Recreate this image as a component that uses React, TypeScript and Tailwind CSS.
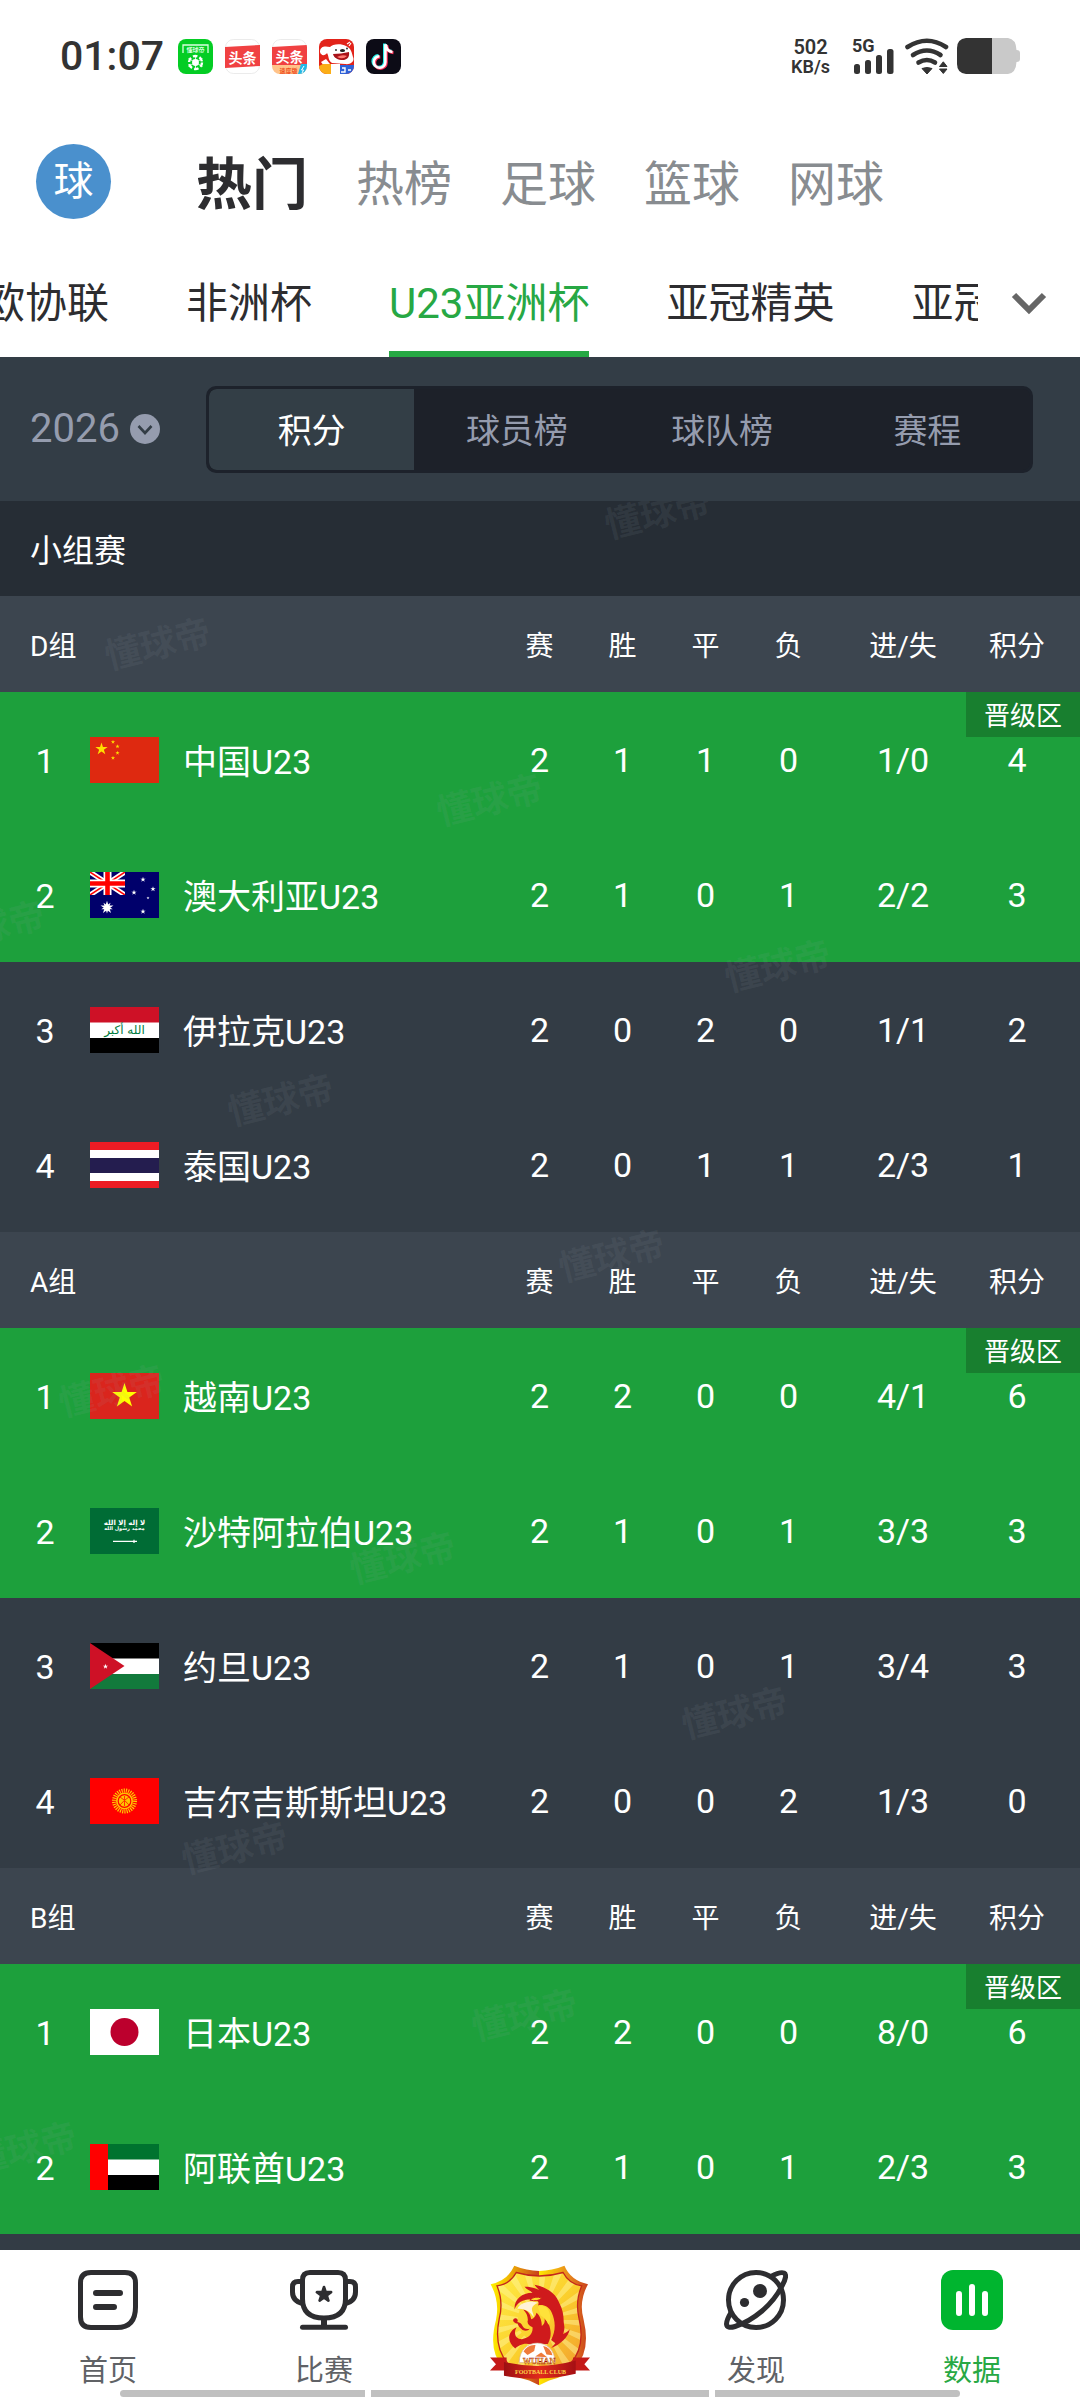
import React, { useState } from "react";

const STAR = "M0 -10 L2.25 -3.1 L9.5 -3.1 L3.64 1.2 L5.88 8.1 L0 3.8 L-5.88 8.1 L-3.64 1.2 L-9.5 -3.1 L-2.25 -3.1 Z";

type FlagCode = "cn" | "au" | "iq" | "th" | "vn" | "sa" | "jo" | "kg" | "jp" | "ae";

type Team = {
  flag: FlagCode;
  name: string;
  stats: (number | string)[];
};

type Group = { name: string; teams: Team[] };

const COLUMNS = ["赛", "胜", "平", "负", "进/失", "积分"];
const CHANNELS = ["热门", "热榜", "足球", "篮球", "网球"];
const LEAGUES = ["欧协联", "非洲杯", "U23亚洲杯", "亚冠精英", "亚冠"];
const VIEWS = ["积分", "球员榜", "球队榜", "赛程"];
const QUALIFIED = 2;

const GROUPS: Group[] = [
  {
    name: "D组",
    teams: [
      { flag: "cn", name: "中国U23", stats: [2, 1, 1, 0, "1/0", 4] },
      { flag: "au", name: "澳大利亚U23", stats: [2, 1, 0, 1, "2/2", 3] },
      { flag: "iq", name: "伊拉克U23", stats: [2, 0, 2, 0, "1/1", 2] },
      { flag: "th", name: "泰国U23", stats: [2, 0, 1, 1, "2/3", 1] },
    ],
  },
  {
    name: "A组",
    teams: [
      { flag: "vn", name: "越南U23", stats: [2, 2, 0, 0, "4/1", 6] },
      { flag: "sa", name: "沙特阿拉伯U23", stats: [2, 1, 0, 1, "3/3", 3] },
      { flag: "jo", name: "约旦U23", stats: [2, 1, 0, 1, "3/4", 3] },
      { flag: "kg", name: "吉尔吉斯斯坦U23", stats: [2, 0, 0, 2, "1/3", 0] },
    ],
  },
  {
    name: "B组",
    teams: [
      { flag: "jp", name: "日本U23", stats: [2, 2, 0, 0, "8/0", 6] },
      { flag: "ae", name: "阿联酋U23", stats: [2, 1, 0, 1, "2/3", 3] },
    ],
  },
];

// centre points, measured from the top of the standings
const WATERMARKS = [
  [658, 13],
  [158, 144],
  [490, 300],
  [-8, 427],
  [778, 466],
  [281, 600],
  [612, 756],
  [112, 891],
  [403, 1058],
  [735, 1213],
  [235, 1348],
  [525, 1515],
  [24, 1648],
];

const Star = ({ x, y, s, fill }: { x: number; y: number; s: number; fill: string }) => (
  <path d={STAR} fill={fill} transform={`translate(${x} ${y}) scale(${s})`} />
);

const FLAGS: Record<FlagCode, React.ReactNode> = {
  cn: (
    <>
      <rect width="69" height="46" fill="#de2910" />
      <Star x={11.5} y={12} s={0.65} fill="#ffde00" />
      <Star x={23} y={5} s={0.22} fill="#ffde00" />
      <Star x={27.5} y={9.5} s={0.22} fill="#ffde00" />
      <Star x={27.5} y={16} s={0.22} fill="#ffde00" />
      <Star x={23} y={21} s={0.22} fill="#ffde00" />
    </>
  ),
  au: (
    <>
      <rect width="69" height="46" fill="#00006b" />
      <svg width="35" height="23" viewBox="0 0 35 23">
        <path d="M0 0 L35 23 M35 0 L0 23" stroke="#fff" strokeWidth="5" />
        <path d="M0 0 L35 23 M35 0 L0 23" stroke="#f00" strokeWidth="1.5" />
        <path d="M17.5 0 V23 M0 11.5 H35" stroke="#fff" strokeWidth="8" />
        <path d="M17.5 0 V23 M0 11.5 H35" stroke="#f00" strokeWidth="4.6" />
      </svg>
      <Star x={17} y={35.5} s={0.68} fill="#fff" />
      <g transform="rotate(180 17 35.5)">
        <Star x={17} y={35.5} s={0.6} fill="#fff" />
      </g>
      <Star x={53} y={7.5} s={0.28} fill="#fff" />
      <Star x={63} y={17} s={0.28} fill="#fff" />
      <Star x={44} y={20.5} s={0.28} fill="#fff" />
      <Star x={53} y={39.5} s={0.28} fill="#fff" />
      <Star x={58} y={26} s={0.16} fill="#fff" />
    </>
  ),
  iq: (
    <>
      <rect width="69" height="46" fill="#fff" />
      <rect width="69" height="15.5" fill="#ce1126" />
      <rect y="31" width="69" height="15" fill="#000" />
      <text x="34.5" y="27" textAnchor="middle" fontSize="12" fill="#007a3d" fontFamily="DejaVu Sans">
        الله أكبر
      </text>
    </>
  ),
  th: (
    <>
      <rect width="69" height="46" fill="#ed1c24" />
      <rect y="8" width="69" height="31" fill="#fff" />
      <rect y="16" width="69" height="15" fill="#241d4f" />
    </>
  ),
  vn: (
    <>
      <rect width="69" height="46" fill="#da251d" />
      <Star x={34.5} y={23} s={1.3} fill="#ff0" />
    </>
  ),
  sa: (
    <>
      <rect width="69" height="46" fill="#006c35" />
      <text x="34.5" y="17" textAnchor="middle" fontSize="7" fill="#fff" fontFamily="DejaVu Sans" fontWeight="700">
        لا إله إلا الله
      </text>
      <text x="34.5" y="22" textAnchor="middle" fontSize="5" fill="#fff" fontFamily="DejaVu Sans" fontWeight="700">
        محمد رسول الله
      </text>
      <path d="M23 33.3 H47 M44 31.8 V35" stroke="#fff" strokeWidth="1.2" />
    </>
  ),
  jo: (
    <>
      <rect width="69" height="46" fill="#fff" />
      <rect width="69" height="15.5" fill="#000" />
      <rect y="31" width="69" height="15" fill="#127a3c" />
      <path d="M0 0 L34.5 23 L0 46 Z" fill="#ce1126" />
      <Star x={15.5} y={23.5} s={0.28} fill="#fff" />
    </>
  ),
  kg: (
    <>
      <rect width="69" height="46" fill="#f00" />
      <circle cx="34.5" cy="23" r="10.5" fill="none" stroke="#ffd000" strokeWidth="4" strokeDasharray="1.1 1.1" />
      <circle cx="34.5" cy="23" r="8.5" fill="#ffc400" />
      <circle cx="34.5" cy="23" r="6.3" fill="none" stroke="#f00" strokeWidth="1.2" />
      <path d="M30 19 Q35 22 39 27 M39 19 Q34 22 30 27 M34.5 18 V28" stroke="#f30" strokeWidth="1" fill="none" />
    </>
  ),
  jp: (
    <>
      <rect width="69" height="46" fill="#fff" />
      <circle cx="34.5" cy="23" r="14" fill="#bc002d" />
    </>
  ),
  ae: (
    <>
      <rect width="69" height="46" fill="#fff" />
      <rect width="69" height="15.5" fill="#00732f" />
      <rect y="31" width="69" height="15" fill="#000" />
      <rect width="18" height="46" fill="#f00" />
    </>
  ),
};

const Flag = ({ code }: { code: FlagCode }) => (
  <svg width="69" height="46" viewBox="0 0 69 46" className="block" aria-hidden>
    {FLAGS[code]}
  </svg>
);

const NotificationIcons = () => (
  <div className="flex gap-[12px]" aria-hidden>
    <svg width="35" height="35" viewBox="0 0 35 35">
      <rect width="35" height="35" rx="8" fill="#04cd24" />
      <path d="M5 14 V6 H30 V14" stroke="#d9ffdf" strokeWidth="1.3" fill="none" />
      <text x="17.5" y="12.5" fontSize="6" fontWeight="700" textAnchor="middle" fill="#d9ffdf">
        懂球帝
      </text>
      <circle cx="17.5" cy="23.5" r="6.5" fill="none" stroke="#fff" strokeWidth="2.4" strokeDasharray="4.6 2.2" />
      <circle cx="17.5" cy="23.5" r="3.4" fill="#fff" />
      <path d="M17.5 16 V31 M10.5 19.5 L24.5 27.5 M24.5 19.5 L10.5 27.5" stroke="#fff" strokeWidth="0.8" />
    </svg>
    <svg width="35" height="35" viewBox="0 0 35 35">
      <rect x="0.5" y="0.5" width="34" height="34" rx="8" fill="#fff" stroke="#e2e2e2" strokeWidth="0.7" />
      <path d="M0 8 L35 6 V27 L0 29 Z" fill="#f04142" />
      <text x="17.5" y="23.5" fontSize="14" fontWeight="700" textAnchor="middle" fill="#fff">
        头条
      </text>
    </svg>
    <svg width="35" height="35" viewBox="0 0 35 35">
      <clipPath id="lite">
        <rect width="35" height="35" rx="8" />
      </clipPath>
      <g clipPath="url(#lite)">
        <rect x="0.5" y="0.5" width="34" height="34" rx="8" fill="#fff" stroke="#e2e2e2" strokeWidth="0.7" />
        <path d="M0 8 L35 6 V27 H0 Z" fill="#f04142" />
        <rect y="26" width="35" height="9" fill="#ffc38a" />
        <path d="M29 25 H35 V35 H26 Z" fill="#22b8e6" />
        <path d="M32 27 L29.5 31 H31.5 L30 34" stroke="#fff" strokeWidth="1" fill="none" />
        <text x="17.5" y="22.5" fontSize="14" fontWeight="700" textAnchor="middle" fill="#fff">
          头条
        </text>
        <text x="16.5" y="33.5" fontSize="6" fontWeight="700" textAnchor="middle" fill="#f0501e">
          速度版
        </text>
      </g>
    </svg>
    <svg width="35" height="35" viewBox="0 0 35 35">
      <clipPath id="dog">
        <rect width="35" height="35" rx="8" />
      </clipPath>
      <g clipPath="url(#dog)">
        <rect width="35" height="35" fill="#e2231a" />
        <path d="M1 13 C1 7 6 7 11 8 C13 5 22 4 27 7 C32 9 33 14 34 18 C36 22 32 26 26 25 L13 24 C9 22 10 17 8 14 C6 17 2 17 1 13 Z" fill="#fff" />
        <path d="M2 23 L7 20 L11 25 L5 27 Z" fill="#fff" />
        <path d="M28 5 L31 3 M30 7 L32 4" stroke="#fff" strokeWidth="1.2" />
        <ellipse cx="23.5" cy="11.5" rx="2.6" ry="1.5" fill="#222" />
        <circle cx="17" cy="11" r="0.9" fill="#222" />
        <circle cx="28" cy="9.5" r="0.9" fill="#222" />
        <path d="M14 15 C19 15 25 14 30 13 C31 19 27 21 24 21 C19 21 15 19 14 15 Z" fill="#a81218" />
        <path d="M18 18 Q23 15 28 17 Q24 21 18 18 Z" fill="#ff7a72" />
        <path d="M0 27 L4 25 H12 V35 H0 Z" fill="#fbae17" />
        <path d="M12 25 H21 V35 H12 Z" fill="#fff" />
        <rect x="21" y="26" width="14" height="9" fill="#2f62d8" />
        <path d="M23 29 H26 V33 H22 M29 31 H32" stroke="#fff" strokeWidth="1.4" fill="none" />
      </g>
    </svg>
    <svg width="35" height="35" viewBox="0 0 35 35">
      <rect width="35" height="35" rx="8" fill="#0c0b16" />
      <g fill="none" strokeWidth="3">
        <path d="M18.500 4.500 V22.500 A5.800 5.800 0 1 1 12.500 16.600 M19 5 Q19.500 11.500 25.500 12.300" stroke="#25f4ee" />
        <path d="M20.300 6 V23.700 A5.800 5.800 0 1 1 14.300 17.900 M20.800 6.500 Q21.500 13 27.500 13.700" stroke="#fe2c55" />
        <path d="M19.400 5.200 V23 A5.800 5.800 0 1 1 13.400 17.200 M19.900 5.600 Q20.500 12.300 26.500 13" stroke="#fff" strokeWidth="2.600" />
      </g>
    </svg>
  </div>
);

const StatusBar = () => (
  <div className="flex h-28 items-center justify-between px-[60px] text-[#333]">
    <div className="flex items-center gap-[14px]">
      <time className="text-[41px] leading-none font-medium">01:07</time>
      <NotificationIcons />
    </div>
    <div className="flex items-center">
      <div className="mr-[22px] text-center font-semibold whitespace-nowrap">
        <div className="pt-0.5 text-[20px] leading-5">502</div>
        <div className="text-[18px] leading-5">KB/s</div>
      </div>
      <svg width="43" height="36" viewBox="0 0 43 36" className="mr-2.5 overflow-visible" aria-hidden>
        <text x="0" y="14" fontSize="18" fontWeight="700" fill="#333">
          5G
        </text>
        <g fill="#333">
          <rect x="2" y="26" width="6" height="10" rx="2.5" />
          <rect x="13" y="22" width="6" height="14" rx="2.5" />
          <rect x="24" y="17" width="6" height="19" rx="2.5" />
          <rect x="35" y="11" width="6.500" height="25" rx="2.5" />
        </g>
      </svg>
      <svg width="44" height="36" viewBox="0 0 44 36" className="mr-2" aria-hidden>
        <g fill="none" stroke="#333" strokeWidth="4.6" strokeLinecap="round">
          <path d="M2.500 9 Q22 -3.500 41 9" />
          <path d="M8 17 Q22 8 35.500 17" />
          <path d="M13.500 24.500 Q22 19.500 30 24.500" />
        </g>
        <g fill="#333" stroke="#333" strokeWidth="1" strokeLinejoin="round">
          <path d="M17 30.500 Q22 28.500 27 30.500 L22 36 Z" />
          <path d="M34.500 28.500 H42 L38.300 23.800 Z M34.500 31 H42 L38.300 35.500 Z" />
        </g>
      </svg>
      <svg width="63" height="36" viewBox="0 0 63 36" aria-hidden>
        <path d="M35 0 H51 Q59 1 59.500 12 Q63 12 63 15 V21 Q63 24 59.500 24 Q59 35 51 36 H35 Z" fill="#c9c9c9" />
        <path d="M35 0 H9 Q0 1 0 10 V26 Q0 35 9 36 H35 Z" fill="#333" />
      </svg>
    </div>
  </div>
);

const Crest = () => (
  <svg width="100" height="121" viewBox="62 75 301 363" aria-hidden>
    <defs>
      <linearGradient id="rim" x1="0" x2="1">
        <stop offset="0" stopColor="#fff200" />
        <stop offset="0.15" stopColor="#f5c400" />
        <stop offset="0.5" stopColor="#c8401c" />
        <stop offset="0.501" stopColor="#ffe600" />
        <stop offset="0.8" stopColor="#e88a1c" />
        <stop offset="1" stopColor="#c9401c" />
      </linearGradient>
      <linearGradient id="field" x1="0" x2="1" y1="0" y2="1">
        <stop offset="0" stopColor="#fff04a" />
        <stop offset="0.5" stopColor="#fbd02c" />
        <stop offset="1" stopColor="#ef9030" />
      </linearGradient>
      <linearGradient id="ribbon" x1="0" x2="1">
        <stop offset="0" stopColor="#9c0f12" />
        <stop offset="0.5" stopColor="#e22a1c" />
        <stop offset="1" stopColor="#a51014" />
      </linearGradient>
      <clipPath id="shield">
        <path d="M141 97 Q210 118 282 97 Q300 132 338 137 Q318 185 330 235 Q350 320 305 370 L210 412 L115 370 Q72 320 90 235 Q103 185 83 137 Q122 132 141 97 Z" />
      </clipPath>
    </defs>
    <path
      d="M135 77 Q210 108 286 77 Q305 122 357 132 Q328 185 344 240 Q366 335 318 382 Q285 412 240 422 L210 436 L180 422 Q135 412 102 382 Q55 335 80 240 Q92 185 64 132 Q115 122 135 77 Z"
      fill="url(#rim)"
    />
    <g clipPath="url(#shield)">
      <rect x="62" y="75" width="301" height="363" fill="url(#field)" />
      <circle cx="210" cy="240" r="130" fill="none" stroke="#fff6a0" strokeWidth="130" strokeDasharray="18 22.800" opacity="0.45" />
    </g>
    <path
      d="M141 97 Q210 118 282 97 Q300 132 338 137 Q318 185 330 235 Q350 320 305 370 L210 412 L115 370 Q72 320 90 235 Q103 185 83 137 Q122 132 141 97 Z"
      fill="none"
      stroke="#c4261c"
      strokeWidth="4"
    />
    {/* phoenix: head and crest, flame body, left tail, right wing */}
    <g fill="#cf1a1c">
      <path d="M136 208 C134 180 156 158 190 158 C180 150 172 148 166 140 C186 140 200 144 210 150 C204 144 200 140 196 134 C236 142 262 162 272 192 C290 226 288 280 262 312 L246 300 C262 270 258 240 248 218 C240 198 220 192 206 196 C212 188 206 180 196 178 C168 174 144 184 136 208 Z" />
      <path d="M162 208 C176 212 184 222 186 238 C194 236 200 228 202 218 C214 228 218 244 218 258 C226 252 228 244 226 234 C244 252 252 284 236 312 L176 312 C160 310 146 318 138 326 C112 306 114 276 142 262 C132 280 138 298 158 298 C180 294 192 280 190 262 C180 258 172 250 176 240 C176 226 170 216 162 208 Z" />
      <path d="M132 244 a7 7 0 1 1 12 2 q12 2 16 12 q6 12 22 8 q-8 10 -22 4 q-12 -8 -16 -20 q-6 2 -12 -6 Z" />
      <path d="M272 230 C288 262 272 300 246 324 C274 314 298 292 302 268 C296 276 288 280 282 282 C290 262 286 246 272 230 Z" />
    </g>
    <path d="M144 206 C152 190 170 184 190 184 L208 188 C196 192 190 198 188 206 C188 216 194 222 194 232 C184 216 170 204 144 206 Z" fill="#fff3d6" />
    <path d="M182 180 Q196 166 218 174 Q206 186 182 180 Z" fill="#ffd92e" stroke="#cf1a1c" strokeWidth="3" />
    <path d="M206 200 C222 194 238 202 242 222 C246 236 242 248 238 254 C232 240 224 232 214 226 Z" fill="#ffe23a" />
    <path d="M150 368 C150 290 258 290 258 368 Z" fill="#fff" stroke="#d8b090" strokeWidth="2" />
    <path d="M163 335 q12 -22 36 -20 l-4 18 l-20 12 Z M222 318 q22 4 28 28 l-18 -2 Z M198 350 l18 -12 l18 14 Z" fill="#ef7a3a" />
    <path d="M62 353 H112 V392 H62 L80 373 Z M363 353 H312 V392 H363 L346 373 Z" fill="#c41a18" />
    <path d="M104 366 Q210 392 320 362 V402 Q210 428 104 408 Z" fill="url(#ribbon)" />
    <text x="210" y="371" fontSize="25" fontWeight="700" textAnchor="middle" fontFamily="Liberation Serif" fill="#ffd84a" stroke="#a51014" strokeWidth="1">
      WUHAN
    </text>
    <text x="214" y="402" fontSize="18" fontWeight="700" textAnchor="middle" fontFamily="Liberation Serif" fill="#ffd84a">
      FOOTBALL CLUB
    </text>
  </svg>
);

const HomeIcon = () => (
  <svg width="60" height="60" viewBox="0 0 60 60" fill="none" stroke="#2d2d30" aria-hidden>
    <path
      d="M13 2.500 H47 Q57.500 2.500 57.500 13 V37 Q57.500 57.500 39 57.500 H13 Q2.500 57.500 2.500 47 V13 Q2.500 2.500 13 2.500 Z"
      strokeWidth="5"
    />
    <path d="M18 23 H42 M18 37 H36" strokeWidth="6" strokeLinecap="round" />
  </svg>
);

const TrophyIcon = () => (
  <svg width="68" height="60" viewBox="0 0 68 60" fill="none" stroke="#2d2d30" strokeWidth="5" aria-hidden>
    <path d="M20 2.500 H48 Q55.500 2.500 55.500 10 V29 Q55.500 48 34 48 Q12.500 48 12.500 29 V10 Q12.500 2.500 20 2.500 Z" />
    <path d="M12.500 11.500 H8 Q2.500 11.500 2.500 17 V22 Q2.500 31 12.500 33.500 M55.500 11.500 H60 Q65.500 11.500 65.500 17 V22 Q65.500 31 55.500 33.500" />
    <path d="M34 48 V57" strokeWidth="6" />
    <path d="M12.500 57.300 H55.500" strokeLinecap="round" />
    <path d={STAR} transform="translate(34 24.500) scale(0.75)" fill="#2d2d30" strokeWidth="3.500" strokeLinejoin="round" />
  </svg>
);

const PlanetIcon = () => (
  <svg width="64" height="60" viewBox="0 0 64 60" fill="none" stroke="#2d2d30" strokeWidth="5" aria-hidden>
    <circle cx="32" cy="30" r="27.500" />
    <path d="M47 6.500 Q56 1.500 60 3 Q64 5 58 16 Q51 30 38 41 Q25 52 11 56.500 Q3 59 2.500 54 Q2.500 50 7 42.500" />
    <circle cx="36" cy="21" r="7" fill="#2d2d30" stroke="none" />
    <circle cx="20.500" cy="32.500" r="4.600" fill="#2d2d30" stroke="none" />
  </svg>
);

const DataIcon = () => (
  <svg width="62" height="60" viewBox="0 0 62 60" aria-hidden>
    <rect width="62" height="60" rx="12" fill="#00b52f" />
    <path d="M18 24 V43 M31 17 V43 M44 24 V43" stroke="#fff" strokeWidth="6" strokeLinecap="round" />
  </svg>
);

const TABS = [
  { label: "首页", icon: <HomeIcon /> },
  { label: "比赛", icon: <TrophyIcon /> },
  { label: "", icon: <Crest /> },
  { label: "发现", icon: <PlanetIcon /> },
  { label: "数据", icon: <DataIcon /> },
];

const GroupTable = ({ group }: { group: Group }) => (
  <table className="w-full table-fixed border-collapse text-center text-white">
    <colgroup>
      <col className="w-[90px]" />
      <col className="w-[93px]" />
      <col />
      <col className="w-[83px]" />
      <col className="w-[83px]" />
      <col className="w-[83px]" />
      <col className="w-[83px]" />
      <col className="w-[146px]" />
      <col className="w-[104px]" />
    </colgroup>
    <thead>
      <tr className="h-24 bg-[#3c454f] text-[28px]">
        <th colSpan={3} scope="colgroup" className="pt-1.5 pl-[30px] text-left font-normal">
          {group.name}
        </th>
        {COLUMNS.map((col) => (
          <th key={col} scope="col" className="pt-1.5 font-normal last:pr-[22px]">
            {col}
          </th>
        ))}
      </tr>
    </thead>
    <tbody>
      {group.teams.map((team, i) => (
        <tr key={team.flag} className={`h-[135px] text-[34px] ${i < QUALIFIED ? "bg-[#1da03c]" : "bg-[#333c45]"}`}>
          <td className="pt-1">{i + 1}</td>
          <td>
            <Flag code={team.flag} />
          </td>
          <td className="pt-1.5 text-left whitespace-nowrap">{team.name}</td>
          {team.stats.map((value, n) => (
            <td key={COLUMNS[n]} className="relative pt-0.5 last:pr-[22px]">
              {value}
              {i === 0 && n === team.stats.length - 1 && (
                <span className="absolute top-0 right-0 flex h-[45px] w-[114px] items-center justify-center bg-[#187f2f] pt-1 text-[26px]">
                  晋级区
                </span>
              )}
            </td>
          ))}
        </tr>
      ))}
    </tbody>
  </table>
);

const App = () => {
  const [channel, setChannel] = useState("热门");
  const [league, setLeague] = useState("U23亚洲杯");
  const [view, setView] = useState("积分");
  const [tab, setTab] = useState("数据");

  return (
    <div className="flex min-h-screen flex-col overflow-hidden bg-white [font-family:Roboto,'Noto_Sans_CJK_SC',sans-serif]">
      <header>
        <StatusBar />
        <div className="flex h-[139px] items-center pl-9">
          <button type="button" className="mr-[85px] size-[75px] rounded-full bg-[#4a90cd] text-[40px] leading-none text-white">
            球
          </button>
          <nav className="flex items-center gap-12 pt-1.5">
            {CHANNELS.map((name) => (
              <button
                key={name}
                type="button"
                onClick={() => setChannel(name)}
                className={
                  channel === name
                    ? "text-[56px] leading-[72px] font-bold text-[#2d2d30]"
                    : "text-[48px] leading-[72px] text-[#888c90]"
                }
              >
                {name}
              </button>
            ))}
          </nav>
        </div>
        <div className="flex h-[106px]">
          <nav className="flex min-w-0 flex-1 gap-[77px] overflow-hidden">
            {LEAGUES.map((name) => (
              <button
                key={name}
                type="button"
                onClick={() => setLeague(name)}
                className={`shrink-0 border-b-6 pt-1 text-[42px] whitespace-nowrap first:-ml-[17px] ${
                  league === name ? "border-[#27a844] text-[#27a844]" : "border-transparent text-[#2d2d30]"
                }`}
              >
                {name}
              </button>
            ))}
          </nav>
          <button type="button" aria-label="更多赛事" className="flex w-[102px] shrink-0 items-center justify-center">
            <svg width="36" height="24" viewBox="0 0 36 24" fill="none" stroke="#666" strokeWidth="6">
              <path d="M3 3 L18 18 L33 3" />
            </svg>
          </button>
        </div>
      </header>

      <main className="flex-1 bg-[#333c45]">
        <div className="flex h-36 items-center bg-[#333d46] pr-[47px] pl-[30px]">
          <label className="relative mr-[46px] flex items-center">
            <select
              aria-label="赛季"
              className="w-[130px] appearance-none bg-transparent text-[40px] leading-none text-[#959cae] outline-none"
            >
              <option>2026</option>
            </select>
            <svg width="30" height="30" viewBox="0 0 30 30" className="pointer-events-none absolute right-0">
              <circle cx="15" cy="15" r="15" fill="#959cae" />
              <path d="M8.500 12 L15 19 L21.500 12" fill="none" stroke="#333d46" strokeWidth="2.600" />
            </svg>
          </label>
          <div className="flex h-[87px] flex-1 overflow-hidden rounded-[10px] border-3 border-[#1d222b] bg-[#1d2129]">
            {VIEWS.map((name) => (
              <button
                key={name}
                type="button"
                onClick={() => setView(name)}
                className={`flex-1 pt-1 text-[34px] ${
                  view === name ? "rounded-l-lg bg-[#333e46] text-white" : "text-[#959cae]"
                }`}
              >
                {name}
              </button>
            ))}
          </div>
        </div>

        <div className="relative overflow-hidden">
          <h2 className="flex h-[95px] items-center bg-[#262d35] pt-1 pl-[30px] text-[32px] text-white">小组赛</h2>
          {GROUPS.map((group) => (
            <GroupTable key={group.name} group={group} />
          ))}
          <div className="pointer-events-none absolute inset-0" aria-hidden>
            {WATERMARKS.map(([x, y]) => (
              <span
                key={`${x}-${y}`}
                className="absolute -translate-1/2 -rotate-14 text-[36px] font-bold whitespace-nowrap text-[#9aa4ae]/10"
                style={{ left: x, top: y }}
              >
                懂球帝
              </span>
            ))}
          </div>
        </div>
      </main>

      <footer className="relative bg-white">
        <nav className="grid h-[150px] grid-cols-5">
          {TABS.map(({ label, icon }) =>
            label ? (
              <button
                key={label}
                type="button"
                onClick={() => setTab(label)}
                className={`flex flex-col items-center gap-[22px] pt-5 text-[29px] leading-[38px] ${
                  tab === label ? "text-[#27a844]" : "text-[#606266]"
                }`}
              >
                {icon}
                {label}
              </button>
            ) : (
              <button key="club" type="button" aria-label="俱乐部" className="flex justify-center pt-[15px]">
                {icon}
              </button>
            )
          )}
        </nav>
        <div className="absolute inset-x-[120px] bottom-[3px] flex gap-1.5" aria-hidden>
          <span className="h-[7px] w-[245px] rounded-l-full bg-[#c0c0c0]" />
          <span className="h-[7px] flex-1 bg-[#c0c0c0]" />
          <span className="h-[7px] w-[245px] rounded-r-full bg-[#c0c0c0]" />
        </div>
      </footer>
    </div>
  );
};

export default App;
